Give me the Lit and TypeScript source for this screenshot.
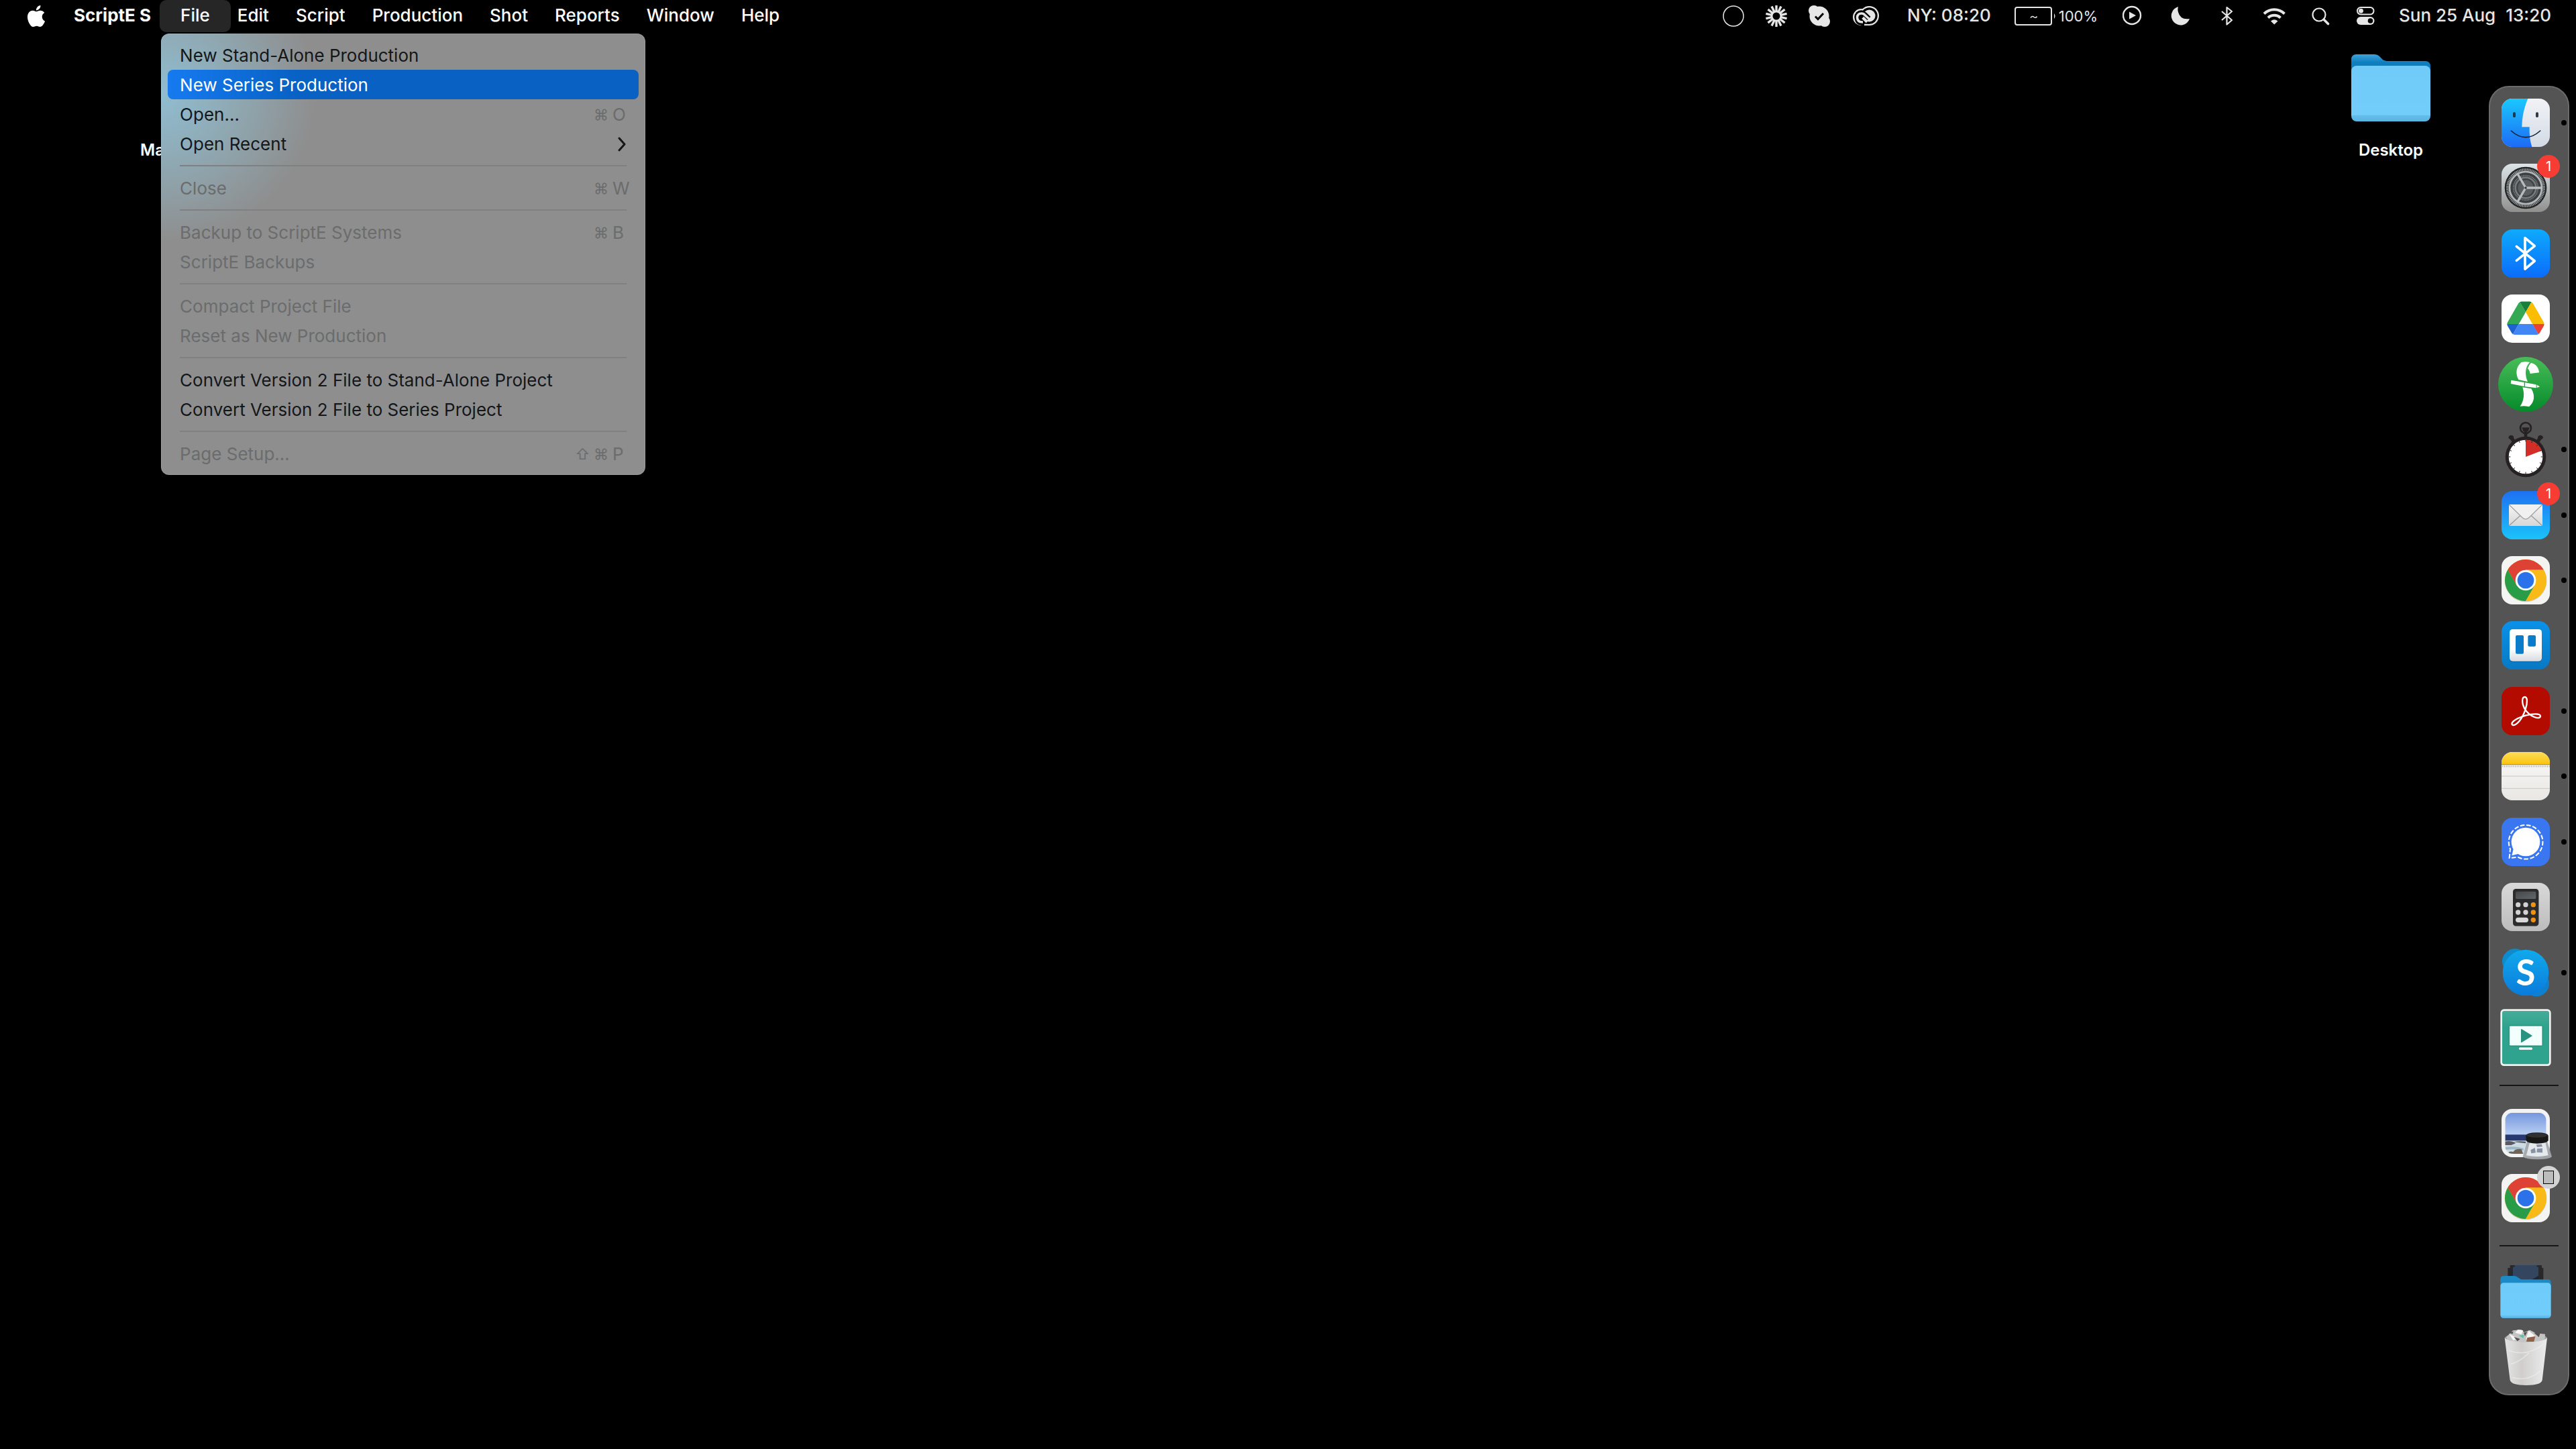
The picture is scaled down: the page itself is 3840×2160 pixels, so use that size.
import { LitElement, html, svg, css, nothing, type TemplateResult } from "lit";
import { customElement, property } from "lit/decorators.js";
import { classMap } from "lit/directives/class-map.js";

interface MenuEntry {
  label: string;
  keys?: string[];
  submenu?: boolean;
  disabled?: boolean;
  active?: boolean;
}

const fileMenu: MenuEntry[][] = [
  [
    { label: "New Stand-Alone Production" },
    { label: "New Series Production", active: true },
    { label: "Open...", keys: ["⌘", "O"] },
    { label: "Open Recent", submenu: true },
  ],
  [{ label: "Close", keys: ["⌘", "W"], disabled: true }],
  [
    { label: "Backup to ScriptE Systems", keys: ["⌘", "B"], disabled: true },
    { label: "ScriptE Backups", disabled: true },
  ],
  [
    { label: "Compact Project File", disabled: true },
    { label: "Reset as New Production", disabled: true },
  ],
  [
    { label: "Convert Version 2 File to Stand-Alone Project" },
    { label: "Convert Version 2 File to Series Project" },
  ],
  [{ label: "Page Setup...", keys: ["⇧", "⌘", "P"], disabled: true }],
];

const menus = ["Edit", "Script", "Production", "Shot", "Reports", "Window", "Help"];

/* ---------- dock artwork (three drawing units per pixel) ---------- */

interface DockItem {
  name: string;
  box: [number, number, number, number];
  art: TemplateResult;
  running?: boolean;
  badge?: string;
  window?: boolean;
}

const tile = (x: number, y: number, fill: string) =>
  svg`<rect x=${x} y=${y} width="216" height="216" rx="48" fill=${fill} />`;

const spokes = (n: number, cx: number, cy: number, r1: number, r2: number, color: string, w: number) =>
  Array.from({ length: n }, (_, i) => {
    const a = (i * 2 * Math.PI) / n;
    return svg`<line x1=${cx + r1 * Math.sin(a)} y1=${cy - r1 * Math.cos(a)} x2=${cx + r2 * Math.sin(a)} y2=${cy - r2 * Math.cos(a)} stroke=${color} stroke-width=${w} />`;
  });

const finder = svg`
  <defs>
    <linearGradient id="fb" x1="0" y1="0" x2="0" y2="1"><stop offset="0" stop-color="#1ac8fd"/><stop offset="1" stop-color="#1d6bf5"/></linearGradient>
    <linearGradient id="fw" x1="0" y1="0" x2="0" y2="1"><stop offset="0" stop-color="#f2f2f6"/><stop offset="1" stop-color="#d3dbe6"/></linearGradient>
    <clipPath id="fc"><rect x="117" y="110" width="216" height="216" rx="48"/></clipPath>
  </defs>
  ${tile(117, 110, "url(#fw)")}
  <path clip-path="url(#fc)" fill="url(#fb)" d="M117 110H235C216 154 209 196 208 237H242C241 268 244 300 253 326H117Z"/>
  <rect x="168" y="171" width="12" height="23" rx="5" fill="#1b3a50"/>
  <rect x="270" y="171" width="12" height="23" rx="5" fill="#343a42"/>
  <path d="M160 254Q225 312 290 254" fill="none" stroke="#13233a" stroke-width="5" stroke-linecap="round"/>`;

const settings = svg`
  <defs><linearGradient id="sg" x1="0" y1="0" x2="0" y2="1"><stop offset="0" stop-color="#dde5ea"/><stop offset="1" stop-color="#8f8f8d"/></linearGradient></defs>
  ${tile(117, 404, "url(#sg)")}
  <circle cx="225" cy="512" r="94" fill="#232425"/>
  ${spokes(72, 225, 512, 76, 87, "#a3a7a9", 4)}
  <circle cx="225" cy="512" r="72" fill="#3c3f41" stroke="#b4b8ba" stroke-width="8"/>
  <circle cx="225" cy="512" r="55" fill="none" stroke="#85898b" stroke-width="5" stroke-dasharray="4 3"/>
  <circle cx="225" cy="512" r="46" fill="#3f4143" stroke="#777b7d" stroke-width="8"/>
  <circle cx="225" cy="512" r="35" fill="#5b5e60"/>
  <path d="M225 512H296M225 512L189 450M225 512L189 574" stroke="#b9bcbe" stroke-width="10" stroke-linecap="round"/>
  <circle cx="225" cy="512" r="5" fill="#303234"/>`;

const bluetooth = svg`
  <defs><linearGradient id="bt" x1="0" y1="0" x2="0" y2="1"><stop offset="0" stop-color="#0eaafc"/><stop offset="1" stop-color="#0a6cfb"/></linearGradient></defs>
  ${tile(117, 693, "url(#bt)")}
  <path d="M184 769L265 834L222 870V731L265 767L184 832" fill="none" stroke="#fff" stroke-width="11" stroke-linecap="round" stroke-linejoin="round"/>`;

const drive = svg`
  ${tile(117, 57, "#fff")}
  <g transform="translate(142 88.500) scale(1.9)">
    <path d="m6.6 66.85 3.85 6.65c.8 1.4 1.95 2.5 3.3 3.3l13.75-23.8h-27.5c0 1.55.4 3.1 1.2 4.5z" fill="#1e62cd"/>
    <path d="m43.65 25-13.75-23.8c-1.35.8-2.5 1.9-3.3 3.3l-25.4 44a9.06 9.06 0 0 0 -1.2 4.500h27.500z" fill="#34a853"/>
    <path d="m73.55 76.8c1.35-.8 2.5-1.9 3.3-3.3l1.6-2.75 7.65-13.25c.8-1.4 1.2-2.95 1.2-4.5h-27.502l5.852 11.500z" fill="#ea4335"/>
    <path d="m43.65 25 13.75-23.8c-1.35-.8-2.9-1.2-4.5-1.2h-18.5c-1.6 0-3.15.45-4.5 1.2z" fill="#188038"/>
    <path d="m59.8 53h-32.3l-13.75 23.8c1.35.8 2.9 1.2 4.5 1.2h50.8c1.6 0 3.15-.45 4.5-1.2z" fill="#4285f4"/>
    <path d="m73.4 26.5-12.7-22c-.8-1.4-1.95-2.5-3.3-3.3l-13.75 23.8 16.15 28h27.45c0-1.55-.4-3.1-1.2-4.5z" fill="#fbbc04"/>
  </g>`;

const script = svg`
  <defs><linearGradient id="sc" x1="0" y1="0" x2="0" y2="1"><stop offset="0" stop-color="#48bd58"/><stop offset="1" stop-color="#068a2b"/></linearGradient></defs>
  <circle cx="225" cy="459" r="123" fill="url(#sc)"/>
  <g fill="#fff">
    <path d="M206 360Q224 355 243 360C222 382 220 415 234 447L193 438C178 410 182 380 206 360Z"/>
    <path d="M249 362C270 368 284 384 285 406L245 411C244 402 240 394 234 388Q240 372 249 362Z"/>
    <path d="M160 440L218 450V468L158 456Z"/>
    <path d="M222 451L272 460V475L222 469Z"/>
    <path d="M275 461L288 469L275 474Z"/>
    <path d="M211 472L250 478C268 508 265 538 240 559Q220 554 200 557C219 530 220 500 211 472Z"/>
  </g>`;

const stopwatch = svg`
  <g fill="#262223">
    <circle cx="225" cy="657" r="24" fill="none" stroke="#262223" stroke-width="8"/>
    <path d="M208 655H242L236 672H232V702H218V672H214Z"/>
    <path d="M148 702Q148 690 160 689Q174 692 171 700L177 712L164 720L158 710Z"/>
    <path d="M303 702Q303 690 291 689Q277 692 280 700L274 712L287 720L293 710Z"/>
    <circle cx="225" cy="786" r="91"/>
  </g>
  <circle cx="225" cy="786" r="76" fill="#fff"/>
  <path d="M225 786V710A76 76 0 0 1 297 758Z" fill="#d32d27"/>
  ${spokes(16, 225, 786, 68, 77, "#262223", 3)}`;

const mail = svg`
  <defs>
    <linearGradient id="ml" x1="0" y1="0" x2="0" y2="1"><stop offset="0" stop-color="#1e70f2"/><stop offset="1" stop-color="#1bc3fb"/></linearGradient>
    <linearGradient id="me" x1="0" y1="0" x2="0" y2="1"><stop offset="0" stop-color="#f6f6f6"/><stop offset="1" stop-color="#d6d6d6"/></linearGradient>
  </defs>
  ${tile(117, 933, "url(#ml)")}
  <rect x="150" y="993" width="150" height="96" rx="5" fill="url(#me)"/>
  <path d="M152 1087L200 1043M298 1087L250 1043" stroke="#9c9c9c" stroke-width="4"/>
  <path d="M152 995L208 1050Q225 1067 242 1050L298 995" fill="#f0f0f0" stroke="#a3a3a3" stroke-width="4"/>`;

const chromeAt = (top: number) => {
  const y = top + 108;
  return svg`
  ${tile(117, top, "#f4f4f2")}
  <circle cx="225" cy=${y + 3} r="94" fill="#c9cfc9"/>
  <g transform="translate(225 ${y})">
    <circle r="93" fill="#f9b916"/>
    <path d="M-80.500 -46.500A93 93 0 0 1 80.500 -46.500H0L-40 23Z" fill="#dd4235"/>
    <path d="M-80.500 -46.500A93 93 0 0 0 0 93L40 23H-40Z" fill="#299c48"/>
    <path d="M0 -46.500H80.500A93 93 0 0 1 0 93L40 23L0 0Z" fill="#f9b916"/>
    <circle r="46" fill="#fff"/>
    <circle r="37" fill="#2b72ea"/>
  </g>`;
};

const trello = svg`
  <defs><linearGradient id="tr" x1="0" y1="0" x2="0" y2="1"><stop offset="0" stop-color="#0a91e8"/><stop offset="1" stop-color="#0879c4"/></linearGradient>
  <linearGradient id="tw" x1="0" y1="0" x2="0" y2="1"><stop offset="0.600" stop-color="#fff"/><stop offset="1" stop-color="#d8dade"/></linearGradient></defs>
  ${tile(117, 351, "url(#tr)")}
  <rect x="153" y="391" width="144" height="143" rx="14" fill="#0766a8"/>
  <rect x="153" y="387" width="144" height="143" rx="14" fill="url(#tw)"/>
  <rect x="180" y="414" width="36" height="83" rx="6" fill="#0b7cc9"/>
  <rect x="235" y="414" width="35" height="50" rx="6" fill="#0b7cc9"/>`;

const acrobat = svg`
  ${tile(117, 645, "#b30b00")}
  <path d="M220 742C206 715 208 690 221 690C234 690 233 717 224 745C210 788 186 815 169 816C154 812 166 790 226 772C255 765 291 762 291 776C290 792 245 782 220 742Z" fill="none" stroke="#fff" stroke-width="7" stroke-linejoin="round"/>`;

const notes = svg`
  <defs>
    <linearGradient id="ny" x1="0" y1="0" x2="0" y2="1"><stop offset="0" stop-color="#fddb5c"/><stop offset="1" stop-color="#fbc50d"/></linearGradient>
    <linearGradient id="nw" x1="0" y1="0" x2="0" y2="1"><stop offset="0" stop-color="#faf9f8"/><stop offset="1" stop-color="#e9e7e4"/></linearGradient>
    <clipPath id="nc"><rect x="117" y="933" width="216" height="216" rx="48"/></clipPath>
  </defs>
  <g clip-path="url(#nc)">
    <rect x="117" y="933" width="216" height="216" fill="url(#nw)"/>
    <rect x="117" y="933" width="216" height="55" fill="url(#ny)"/>
    <path d="M117 989H333" stroke="#a6935a" stroke-width="4"/>
    <path d="M121 997H333" stroke="#a8a6a2" stroke-width="7" stroke-dasharray="3 5"/>
    <path d="M117 1041H333M117 1096H333" stroke="#c9c7c3" stroke-width="3"/>
  </g>`;

const signal = svg`
  ${tile(117, 57, "#3a76f0")}
  <circle cx="225" cy="165" r="64" fill="#fff"/>
  <path d="M172 190L163 226L200 217Z" fill="#fff"/>
  <path d="M190 233A76 76 0 1 0 156 197L152 237Z" fill="none" stroke="#fff" stroke-width="6" stroke-dasharray="20 8"/>`;

const calculator = svg`
  <defs>
    <linearGradient id="cg" x1="0" y1="0" x2="0" y2="1"><stop offset="0" stop-color="#d9d9d9"/><stop offset="1" stop-color="#bcbcbc"/></linearGradient>
    <linearGradient id="cd" x1="0" y1="0" x2="1" y2="1"><stop offset="0" stop-color="#45484b"/><stop offset="1" stop-color="#62666a"/></linearGradient>
  </defs>
  ${tile(117, 351, "url(#cg)")}
  <rect x="168" y="380" width="115" height="166" rx="13" fill="#8d8d8d"/>
  <rect x="168" y="378" width="115" height="166" rx="13" fill="#2b2b2c"/>
  <rect x="180" y="390" width="91" height="33" rx="5" fill="url(#cd)"/>
  ${[449, 483].map((y) => svg`<circle cx="191" cy=${y} r="11" fill="#d2d2d2"/><circle cx="225" cy=${y} r="11" fill="#d2d2d2"/>`)}
  ${[449, 483, 517].map((y) => svg`<circle cx="259" cy=${y} r="11" fill="#f19110"/>`)}
  <rect x="180" y="506" width="57" height="22" rx="11" fill="#d8d8d8"/>`;

const skype = svg`
  <defs><linearGradient id="sk" x1="0" y1="0" x2="0" y2="1"><stop offset="0" stop-color="#11a9ec"/><stop offset="1" stop-color="#0a7bdb"/></linearGradient></defs>
  <circle cx="177" cy="703" r="57" fill="#0d8ccb"/>
  <circle cx="273" cy="802" r="57" fill="#0f80cd"/>
  <circle cx="225" cy="753" r="103" fill="url(#sk)"/>
  <text x="225" y="809" text-anchor="middle" font-family="Lato, sans-serif" font-weight="700" font-size="158" fill="#fff">S</text>`;

const player = svg`
  <defs><linearGradient id="pl" x1="0" y1="0" x2="0" y2="1"><stop offset="0" stop-color="#45ac98"/><stop offset="0.300" stop-color="#2fa38d"/></linearGradient></defs>
  <rect x="112" y="916" width="226" height="254" rx="16" fill="#eef3f2"/>
  <rect x="120" y="924" width="210" height="238" rx="9" fill="url(#pl)"/>
  <rect x="151" y="990" width="149" height="90" rx="5" fill="#f2fffc" stroke="#1f8271" stroke-width="3"/>
  <path d="M206 1007L252 1035L206 1063Z" fill="#2a937f" stroke="#2a937f" stroke-width="4" stroke-linejoin="round"/>
  <rect x="194" y="1086" width="62" height="13" rx="5" fill="#f2fffc" stroke="#1f8271" stroke-width="2"/>`;

const preview = svg`
  <defs>
    <linearGradient id="pv" x1="0" y1="0" x2="0" y2="1"><stop offset="0" stop-color="#7596dd"/><stop offset="1" stop-color="#b9cff3"/></linearGradient>
    <clipPath id="pc"><rect x="133" y="175" width="184" height="184" rx="34"/></clipPath>
  </defs>
  ${tile(117, 158, "#f3f3f3")}
  <g clip-path="url(#pc)">
    <rect x="133" y="175" width="184" height="100" fill="url(#pv)"/>
    <rect x="133" y="273" width="184" height="30" fill="#29376f"/>
    <rect x="133" y="300" width="184" height="60" fill="#cbdce4"/>
    <path d="M133 304Q160 298 180 312L160 320H133ZM170 306Q195 300 225 304V312Z" fill="#5b5a62"/>
    <path d="M133 330Q170 322 215 334V344Q180 336 133 340Z" fill="#9fb7c4"/>
    <path d="M146 358Q150 344 170 350Q178 335 206 338L214 360Z" fill="#6f6457"/>
  </g>
  <path d="M231 305L212 372Q225 384 278 384Q330 384 342 372L322 305Z" fill="#a4a8ac" opacity="0.950"/>
  <path d="M243 308L228 366Q275 376 326 366L313 308Z" fill="#e6e9ec"/>
  <path d="M247 342L266 332L270 354L250 357ZM276 336L300 334V354L274 352ZM272 318L296 316L300 327L276 329Z" fill="#8792a2"/>
  <path d="M226 279Q228 264 276 264Q324 264 326 279V300Q318 313 276 313Q234 313 227 300Z" fill="#171717"/>
  <ellipse cx="276" cy="276" rx="47" ry="10" fill="#303030"/>`;

const downloads = svg`
  <defs><linearGradient id="df" x1="0" y1="0" x2="0" y2="1"><stop offset="0" stop-color="#6fcbf9"/><stop offset="0.900" stop-color="#70cdfb"/><stop offset="1" stop-color="#56afdc"/></linearGradient></defs>
  <path d="M155 858H297V870H304V930H145V870H155Z" fill="#29292c"/>
  <path d="M176 858H275V866H282V930H168V866H176Z" fill="#34465f"/>
  <path d="M282 905V930H240Z" fill="#1c2637"/>
  <path d="M112 922Q112 906 128 906H174Q184 906 192 914L205 922H324Q338 922 338 936V980H112Z" fill="#1d8ac6"/>
  <rect x="112" y="937" width="226" height="158" rx="14" fill="url(#df)"/>`;

const trash = svg`
  <defs><linearGradient id="ts" x1="0" y1="0" x2="1" y2="0"><stop offset="0" stop-color="#e4e4e4"/><stop offset="0.400" stop-color="#cfcecd"/><stop offset="1" stop-color="#ececec"/></linearGradient></defs>
  <ellipse cx="226" cy="1185" rx="95" ry="24" fill="#9b9b9b"/>
  <path d="M138 1180L168 1150L205 1146L218 1158L244 1148L270 1162L312 1166L310 1200L226 1212L145 1198Z" fill="#c4c4c4"/>
  <path d="M190 1146L214 1150L206 1168L178 1160ZM238 1150L268 1176L226 1190ZM150 1165L190 1185L170 1195Z" fill="#f6f6f6"/>
  <path d="M262 1160L290 1162L284 1180ZM172 1178L200 1188L188 1198ZM216 1160L232 1156L222 1176ZM152 1160L170 1154L166 1166Z" fill="#54504d"/>
  <path d="M232 1182L268 1176L262 1200H228Z" fill="#8f6147"/>
  <path d="M194 1172L218 1170L214 1184Z" fill="#54c3a6"/>
  <path d="M131 1183C150 1208 300 1210 321 1183L299 1372Q295 1395 227 1395Q160 1395 155 1372Z" fill="url(#ts)"/>
  <path d="M150 1240Q230 1270 306 1210M158 1300Q200 1290 240 1250M165 1360Q240 1380 290 1330" fill="none" stroke="#f4f4f4" stroke-width="5" opacity="0.500"/>`;

const apps: DockItem[] = [
  { name: "Finder", box: [117, 110, 216, 216], art: finder, running: true },
  { name: "System Settings", box: [117, 404, 216, 216], art: settings, badge: "1" },
  { name: "Bluetooth", box: [117, 693, 216, 216], art: bluetooth },
  { name: "Google Drive", box: [117, 57, 216, 216], art: drive },
  { name: "ScriptE", box: [102, 336, 246, 246], art: script },
  { name: "Stopwatch", box: [126, 630, 198, 248], art: stopwatch, running: true },
  { name: "Mail", box: [117, 933, 216, 216], art: mail, running: true, badge: "1" },
  { name: "Chrome", box: [117, 57, 216, 216], art: chromeAt(57), running: true },
  { name: "Trello", box: [117, 351, 216, 216], art: trello },
  { name: "Acrobat", box: [117, 645, 216, 216], art: acrobat, running: true },
  { name: "Notes", box: [117, 933, 216, 216], art: notes, running: true },
  { name: "Signal", box: [117, 57, 216, 216], art: signal, running: true },
  { name: "Calculator", box: [117, 351, 216, 216], art: calculator },
  { name: "Skype", box: [117, 645, 216, 216], art: skype, running: true },
  { name: "Media Player", box: [111, 915, 228, 258], art: player },
];

const recents: DockItem[] = [
  { name: "Preview", box: [117, 158, 216, 216], art: preview },
  { name: "Chrome window", box: [117, 453, 216, 216], art: chromeAt(453), window: true },
];

const places: DockItem[] = [
  { name: "Downloads", box: [111, 864, 228, 240], art: downloads },
  { name: "Trash", box: [129, 1152, 192, 246], art: trash },
];

@customElement("desktop-dock")
export class DesktopDock extends LitElement {
  static styles = css`
    :host {
      display: flex;
      flex-direction: column;
      box-sizing: border-box;
      width: 120px;
      padding: 4px 10px 4px 0;
      border: 2px solid #6b6b6b;
      border-radius: 30px;
      background: #545454;
      font-family: Inter, "Liberation Sans", sans-serif;
    }
    .item {
      position: relative;
      display: flex;
      flex: 1 1 0;
      align-items: center;
      justify-content: center;
      padding: 0;
      border: 0;
      background: none;
      font: inherit;
      color: #fff;
    }
    .item svg {
      display: block;
      overflow: visible;
    }
    .rule {
      flex: 0 0 2px;
      height: 2px;
      margin: 21px 4px 21px 14px;
      border: 0;
      background: #161616;
    }
    .dot {
      position: absolute;
      top: calc(50% - 4px);
      right: -8px;
      width: 8px;
      height: 8px;
      border-radius: 50%;
      background: #000;
    }
    .badge {
      position: absolute;
      top: 0;
      right: 2px;
      display: flex;
      align-items: center;
      justify-content: center;
      width: 34px;
      height: 34px;
      border-radius: 50%;
      background: #f73c33;
      font-size: 20px;
      line-height: 34px;
    }
    .badge.plain {
      background: #d3d3d3;
    }
    .sheet {
      width: 14px;
      height: 18px;
      border: 1px solid #000;
      background: #bcbcbc;
    }
  `;

  private item(i: DockItem) {
    const [x, y, w, h] = i.box;
    return html`<button class="item" aria-label=${i.name}>
      <svg width=${w / 3} height=${h / 3} viewBox="${x} ${y} ${w} ${h}" aria-hidden="true">${i.art}</svg>
      ${i.badge ? html`<span class="badge">${i.badge}</span>` : nothing}
      ${i.window ? html`<span class="badge plain"><span class="sheet"></span></span>` : nothing}
      ${i.running ? html`<span class="dot"></span>` : nothing}
    </button>`;
  }

  render() {
    return html`
      ${apps.map((i) => this.item(i))}
      <hr class="rule" />
      ${recents.map((i) => this.item(i))}
      <hr class="rule" />
      ${places.map((i) => this.item(i))}
    `;
  }
}

@customElement("drop-menu")
export class DropMenu extends LitElement {
  @property({ attribute: false }) groups: MenuEntry[][] = [];

  static styles = css`
    :host {
      display: block;
      box-sizing: border-box;
      width: 722px;
      padding: 10px;
      border-radius: 12px;
      background:
        radial-gradient(ellipse 230px 220px at 0 90px, rgba(144, 194, 216, 0.9), rgba(144, 188, 206, 0.6) 45%, rgba(142, 142, 142, 0) 100%),
        #8e8e8e;
      box-shadow: inset 0 0 0 1px rgba(255, 255, 255, 0.12);
      font-family: Inter, "Liberation Sans", sans-serif;
      font-size: 26px;
      line-height: 42px;
    }
    .entry {
      display: flex;
      align-items: center;
      width: 100%;
      height: 44px;
      padding: 2px 18px 0;
      border: 0;
      border-radius: 8px;
      background: none;
      font: inherit;
      color: #141719;
      text-align: left;
      white-space: nowrap;
    }
    .entry.active {
      background: linear-gradient(90deg, #167af0, #0861c3 200px);
      color: #fff;
    }
    .entry:disabled,
    .keys {
      color: #6a6c6d;
    }
    .label {
      flex: 1;
    }
    .keys {
      display: flex;
    }
    .key {
      width: 28px;
      font-size: 22px;
    }
    .key.last {
      width: 21px;
      font-size: 26px;
    }
    .rule {
      height: 2px;
      margin: 10px 18px;
      border: 0;
      background: #7e8081;
    }
  `;

  render() {
    return this.groups.map(
      (group, n) => html`
        ${n ? html`<hr class="rule" />` : nothing}
        ${group.map(
          (e) => html`<button class=${classMap({ entry: true, active: !!e.active })} ?disabled=${!!e.disabled}>
            <span class="label">${e.label}</span>
            ${e.keys
              ? html`<span class="keys"
                  >${e.keys.map((k, i) => html`<span class=${classMap({ key: true, last: i === e.keys!.length - 1 })}>${k}</span>`)}</span
                >`
              : nothing}
            ${e.submenu
              ? html`<svg width="14" height="22" viewBox="0 0 14 22" aria-hidden="true">
                  <path d="M3 2L11 11L3 20" fill="none" stroke="#141719" stroke-width="3" stroke-linecap="round" stroke-linejoin="round" />
                </svg>`
              : nothing}
          </button>`,
        )}
      `,
    );
  }
}

/* Status icons share one strip of coordinates, 48 units high. */
const status = (name: string, x: number, w: number, art: TemplateResult) =>
  html`<svg class="status" width=${w} height="48" viewBox="${x} 0 ${w} 48" role="img" aria-label=${name}>${art}</svg>`;

@customElement("app-root")
export class AppRoot extends LitElement {
  static styles = css`
    :host {
      display: flex;
      flex-direction: column;
      min-height: 100vh;
      background: #000;
      color: #fff;
      font-family: Inter, "Liberation Sans", sans-serif;
      font-size: 26px;
    }
    .bar {
      display: flex;
      justify-content: space-between;
      height: 48px;
      padding: 0 37px 0 38px;
      line-height: 46px;
      white-space: nowrap;
    }
    .menus,
    .right {
      display: flex;
      align-items: center;
    }
    .holder {
      position: relative;
      margin: 0 -10px;
    }
    .menu {
      display: block;
      height: 48px;
      padding: 0 20px 2px;
      border: 0;
      background: none;
      font: inherit;
      font-weight: 500;
      color: #fff;
    }
    .menu.apple {
      padding: 0 20px 0 0;
    }
    .menu.app {
      padding: 0 23px 2px 20px;
      font-weight: 700;
    }
    .menu.open {
      padding: 0 31px 2px;
      border-radius: 10px;
      background: #262626;
    }
    .drop {
      position: absolute;
      top: 50px;
      left: 2px;
      z-index: 2;
    }
    .right {
      gap: 32px;
      color: #e6e6e6;
      font-weight: 500;
    }
    .status,
    .logo {
      display: block;
    }
    .zone {
      padding: 0 3px 2px 7px;
    }
    .power {
      display: flex;
      align-items: center;
      gap: 4px;
      padding-right: 5px;
      font-size: 22px;
      font-weight: 400;
      line-height: 48px;
    }
    .clock {
      display: flex;
      gap: 15px;
      padding-bottom: 2px;
    }
    .space {
      position: relative;
      display: flex;
      flex: 1;
      justify-content: flex-end;
      padding: 80px 10px;
    }
    .icon {
      position: absolute;
      top: 33px;
      display: flex;
      flex-direction: column;
      align-items: center;
      gap: 27px;
      padding: 0;
      border: 0;
      background: none;
      font: inherit;
      font-size: 24px;
      font-weight: 600;
      line-height: 32px;
      color: #fff;
    }
    .desktop {
      right: 217px;
    }
    .volume {
      top: 160px;
      left: 209px;
    }
  `;

  render() {
    return html`
      <header class="bar">
        <nav class="menus" aria-label="Menu bar">
          <button class="menu apple" aria-label="Apple">
            <svg class="logo" width="32" height="32" viewBox="0 0 24 24" fill="#fff" aria-hidden="true">
              <path
                d="M12.152 6.896c-.948 0-2.415-1.078-3.96-1.04-2.04.027-3.91 1.183-4.961 3.014-2.117 3.675-.546 9.103 1.519 12.09 1.013 1.454 2.208 3.09 3.792 3.039 1.52-.065 2.09-.987 3.935-.987 1.831 0 2.35.987 3.96.948 1.637-.026 2.676-1.48 3.676-2.948 1.156-1.688 1.636-3.325 1.662-3.415-.039-.013-3.182-1.221-3.22-4.857-.026-3.04 2.48-4.494 2.597-4.559-1.429-2.09-3.623-2.324-4.39-2.376-2-.156-3.675 1.09-4.61 1.09zM15.53 3.83c.843-1.012 1.4-2.427 1.245-3.83-1.207.052-2.662.805-3.532 1.818-.78.896-1.454 2.338-1.273 3.714 1.338.104 2.715-.688 3.559-1.701"
              />
            </svg>
          </button>
          <button class="menu app">ScriptE S</button>
          <div class="holder">
            <button class="menu open" aria-expanded="true">File</button>
            <drop-menu class="drop" .groups=${fileMenu}></drop-menu>
          </div>
          ${menus.map((m) => html`<button class="menu">${m}</button>`)}
        </nav>
        <div class="right">
          ${status("Recorder", 2568, 32, svg`<circle cx="2584" cy="24" r="15" fill="none" stroke="#e6e6e6" stroke-width="1.500"/>`)}
          ${status("Activity", 2632, 32, svg`<circle cx="2648" cy="24" r="7" fill="none" stroke="#e6e6e6" stroke-width="3"/>${spokes(14, 2648, 24, 7, 16, "#e6e6e6", 3.4)}`)}
          ${status("Skype", 2696, 32, svg`<circle cx="2712" cy="24" r="14.500" fill="#e6e6e6"/><circle cx="2704" cy="16" r="8" fill="#e6e6e6"/><circle cx="2720" cy="32" r="8" fill="#e6e6e6"/><path d="M2706 24.500L2710 28.500L2718 20" fill="none" stroke="#000" stroke-width="3"/>`)}
          ${status("Creative Cloud", 2760, 44, svg`
            <g fill="#e6e6e6"><circle cx="2774.500" cy="25.500" r="12.500"/><circle cx="2786.500" cy="23.500" r="14.500"/><path d="M2774 30H2788V38H2774Z"/></g>
            <g fill="#000"><circle cx="2774.500" cy="25.500" r="10.200"/><circle cx="2786.500" cy="23.500" r="12.200"/><path d="M2774 30H2787V35.700H2774Z"/></g>
            <circle cx="2786.500" cy="23.500" r="9" fill="#e6e6e6"/>
            <path d="M2779 34.500H2776Q2768 34 2768.500 25.500Q2769 19.500 2775 19.500Q2778 19.500 2781 22.500L2786 27.500" fill="none" stroke="#000" stroke-width="7"/>
            <path d="M2777 33Q2768.500 33 2768.500 26Q2769 20 2775 20Q2778 20 2780 22.500L2786 28" fill="none" stroke="#e6e6e6" stroke-width="3.500"/>
            <path d="M2776.500 26.500L2783 33" stroke="#e6e6e6" stroke-width="3.500"/>`)}
          <span class="zone">NY: 08:20</span>
          <span class="power">
            ${status("Battery", 3002, 62, svg`<rect x="3003" y="11" width="54" height="26" rx="3" fill="none" stroke="#e6e6e6" stroke-width="2"/><path d="M3061 20Q3064 24 3061 28Z" fill="#e6e6e6"/><path d="M3026 26.500Q3028.500 23 3031 25.500Q3033.500 27.500 3035.500 24.500" fill="none" stroke="#e6e6e6" stroke-width="1.600"/>`)}
            <span>100%</span>
          </span>
          ${status("Now Playing", 3164, 34, svg`<circle cx="3178" cy="23" r="13" fill="none" stroke="#e6e6e6" stroke-width="2.400"/><path d="M3174 17.500V28.500L3184 23Z" fill="#e6e6e6"/>`)}
          ${status("Do Not Disturb", 3230, 40, svg`<path d="M3247 10A14 14 0 0 0 3247 18Q3250 30 3264 28A14 14 0 1 1 3247 10Z" fill="#e6e6e6"/>`)}
          ${status("Bluetooth", 3302, 36, svg`<path d="M3312 17L3327 30L3319.500 36.500V11L3327 17L3312 30" fill="none" stroke="#e6e6e6" stroke-width="2.200" stroke-linejoin="round"/>`)}
          ${status("Wi-Fi", 3370, 42, svg`<g fill="none" stroke="#e6e6e6" stroke-width="4"><path d="M3375 20.500A22 22 0 0 1 3405.500 20.500"/><path d="M3381 26.500A13.500 13.500 0 0 1 3399.500 26.500"/></g><path d="M3385 31.500Q3390.200 27 3395.500 31.500L3390.200 36.500Z" fill="#e6e6e6"/>`)}
          ${status("Search", 3444, 32, svg`<g fill="none" stroke="#e6e6e6"><circle cx="3457" cy="22" r="9.500" stroke-width="2.200"/><path d="M3464 29L3470.500 35.500" stroke-width="3.600" stroke-linecap="round"/></g>`)}
          ${status("Control Centre", 3508, 36, svg`<rect x="3514" y="11" width="24.500" height="10.500" rx="5.200" fill="none" stroke="#e6e6e6" stroke-width="2"/><circle cx="3519.500" cy="16.200" r="3.400" fill="#e6e6e6"/><rect x="3513" y="25" width="26.500" height="12" rx="6" fill="#e6e6e6"/><circle cx="3533.500" cy="31" r="3.800" fill="#000"/>`)}
          <span class="clock"><span>Sun 25 Aug</span><span>13:20</span></span>
        </div>
      </header>
      <main class="space">
        <button class="icon volume">Ma</button>
        <button class="icon desktop">
          <svg width="118" height="100" viewBox="0 0 118 100" aria-hidden="true">
            <defs>
              <linearGradient id="back" x1="0" y1="0" x2="0" y2="1"><stop offset="0" stop-color="#3fa3da" /><stop offset="0.300" stop-color="#0f7ec0" /></linearGradient>
              <linearGradient id="front" x1="0" y1="0" x2="0" y2="1"><stop offset="0" stop-color="#71cbf8" /><stop offset="0.880" stop-color="#72cdfb" /><stop offset="0.900" stop-color="#62bcea" /><stop offset="1" stop-color="#5ab3e0" /></linearGradient>
            </defs>
            <path d="M0 8Q0 0 8 0H34Q39 0 42 3L47 8Q50 10 54 10H110Q118 10 118 18V40H0Z" fill="url(#back)" />
            <rect y="17" width="118" height="83" rx="8" fill="url(#front)" />
          </svg>
          <span>Desktop</span>
        </button>
        <desktop-dock></desktop-dock>
      </main>
    `;
  }
}
